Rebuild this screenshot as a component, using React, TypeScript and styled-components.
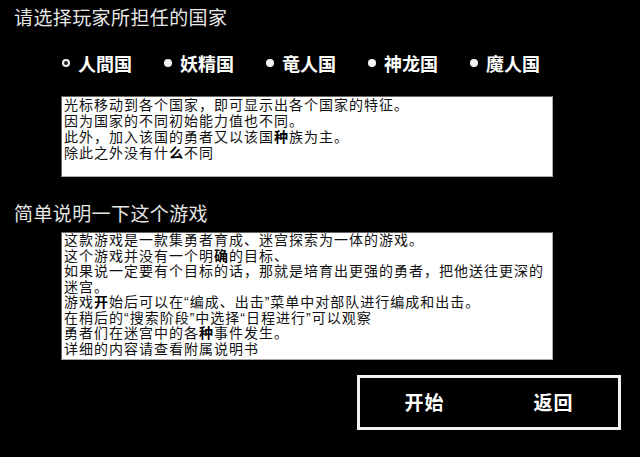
import React from 'react';
import styled, { createGlobalStyle } from 'styled-components';

const GlobalStyle = createGlobalStyle`
    html, body {
        margin: 0;
        padding: 0;
        background: #000;
    }
`;

const CJK = `"Noto Sans CJK SC", "Noto Sans CJK JP", "Noto Sans", sans-serif`;

// 전체 화면
const Screen = styled.div`
    width: 640px;
    height: 457px;
    background: #000;
    display: flex;
    flex-direction: column;
    font-family: ${CJK};
    overflow: hidden;
`;

// 섹션 제목
const Heading = styled.div<{ $top: number }>`
    margin: ${p => p.$top}px 0 0 14px;
    height: 24px;
    line-height: 24px;
    font-size: 19px;
    letter-spacing: 0.4px;
    color: #e6e6e6;
`;

// 국가 선택 줄
const RadioRow = styled.div`
    display: grid;
    grid-template-columns: repeat(5, 102px);
    padding-left: 62px;
    margin-top: 22px;
    height: 24px;
    align-items: center;
`;

const RadioItem = styled.div`
    display: flex;
    align-items: center;
    gap: 8px;
    color: #fff;
    font-size: 18px;
    font-weight: 600;
    line-height: 24px;
`;

const Dot = styled.span<{ $active?: boolean }>`
    width: 8px;
    height: 8px;
    border-radius: 50%;
    background: #f4f4f4;
    box-sizing: border-box;
    ${p => p.$active && `
        background: #222;
        border: 2px solid #f4f4f4;
    `}
`;

// 흰 설명 상자
const TextBox = styled.div<{ $top: number; $height: number; $lh: number }>`
    margin: ${p => p.$top}px 0 0 61px;
    width: 492px;
    height: ${p => p.$height}px;
    box-sizing: border-box;
    background: #fff;
    border: 1px solid;
    border-color: #666 #aaa #aaa #666;
    padding: 0 2px;
    color: #111;
    font-family: "Liberation Sans", ${CJK};
    font-size: 14px;
    letter-spacing: 1px;
    line-height: ${p => p.$lh}px;
`;

const Line = styled.div`
    white-space: normal;
`;

const Strong = styled.b`
    font-weight: 700;
    color: #000;
`;

// 하단 버튼 프레임
const ButtonFrame = styled.div`
    margin: 15px 0 0 357px;
    width: 264px;
    height: 55px;
    box-sizing: border-box;
    border: 3px solid #f2f2f2;
    display: flex;
`;

const MenuButton = styled.button`
    flex: 1;
    background: transparent;
    border: none;
    color: #fff;
    font-family: ${CJK};
    font-size: 19px;
    font-weight: 600;
    letter-spacing: 1px;
    padding: 0 0 2px 0;
    cursor: pointer;
`;

const nations = ['人間国', '妖精国', '竜人国', '神龙国', '魔人国'];

const App = function() {
    return (
        <Screen>
            <GlobalStyle/>
            <Heading $top={5}>请选择玩家所担任的国家</Heading>
            <RadioRow>
                {nations.map((n, i) => (
                    <RadioItem key={n}>
                        <Dot $active={i === 0}/>
                        {n}
                    </RadioItem>
                ))}
            </RadioRow>
            <TextBox $top={21} $height={81} $lh={16}>
                <Line>光标移动到各个国家，即可显示出各个国家的特征。</Line>
                <Line>因为国家的不同初始能力值也不同。</Line>
                <Line>此外，加入该国的勇者又以该国<Strong>种</Strong>族为主。</Line>
                <Line>除此之外没有什<Strong>么</Strong>不同</Line>
            </TextBox>
            <Heading $top={24}>简单说明一下这个游戏</Heading>
            <TextBox $top={7} $height={128} $lh={15.5}>
                <Line>这款游戏是一款集勇者育成、迷宫探索为一体的游戏。</Line>
                <Line>这个游戏并没有一个明<Strong>确</Strong>的目标、</Line>
                <Line>如果说一定要有个目标的话，那就是培育出更强的勇者，把他送往更深的迷宫。</Line>
                <Line>游戏<Strong>开</Strong>始后可以在“编成、出击”菜单中对部队进行编成和出击。</Line>
                <Line>在稍后的“搜索阶段”中选择“日程进行”可以观察</Line>
                <Line>勇者们在迷宫中的各<Strong>种</Strong>事件发生。</Line>
                <Line>详细的内容请查看附属说明书</Line>
            </TextBox>
            <ButtonFrame>
                <MenuButton>开始</MenuButton>
                <MenuButton>返回</MenuButton>
            </ButtonFrame>
        </Screen>
    );
};

export default App;
